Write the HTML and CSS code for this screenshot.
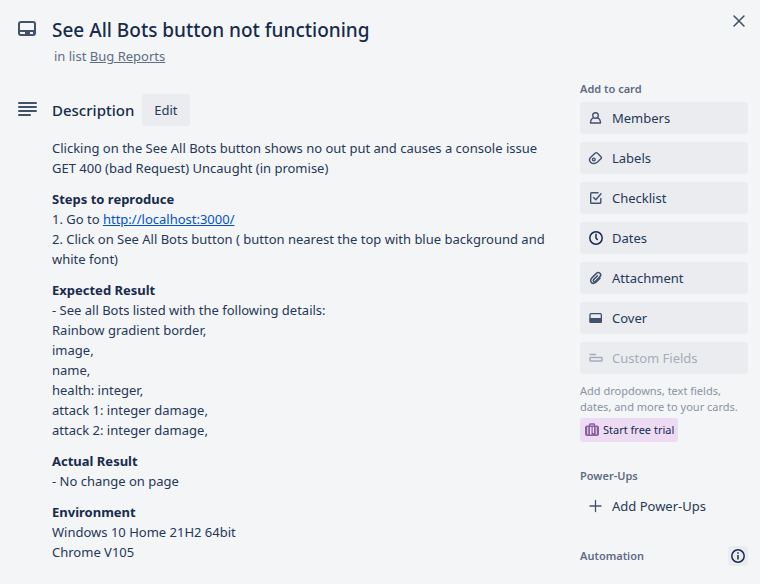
FILE: index.html
```html
<!DOCTYPE html>
<html lang="en">
<head>
<meta charset="utf-8">
<title>See All Bots button not functioning</title>
<link rel="stylesheet" href="styles.css">
</head>
<body>
<div class="card">
  <header class="card-header">
    <svg class="icon-large" viewBox="0 0 24 24" fill="currentColor" aria-hidden="true"><path fill-rule="evenodd" d="M5 5a3 3 0 0 0-3 3v9a3 3 0 0 0 3 3h12a3 3 0 0 0 3-3V8a3 3 0 0 0-3-3H5ZM4 8a1 1 0 0 1 1-1h12a1 1 0 0 1 1 1v6H4V8Zm0 8v1a1 1 0 0 0 1 1h4v-2H4Zm10 0h3v2h-3v-2Z"/></svg>
    <div>
      <h1>See All Bots button not functioning</h1>
      <p class="in-list">in list <a href="#">Bug Reports</a></p>
    </div>
    <button class="close" type="button" aria-label="Close"><svg class="icon-close" viewBox="0 0 20 20" fill="none" stroke="currentColor" stroke-width="1.8" stroke-linecap="round" aria-hidden="true"><path d="m4.500 4.500 11 11m0-11-11 11"/></svg></button>
  </header>
  <div class="columns">
    <main>
      <div class="section-head">
        <svg class="icon-large" viewBox="0 0 24 24" fill="none" stroke="currentColor" stroke-width="2" stroke-linecap="round" aria-hidden="true"><path d="M3 5h17M3 9h17M3 13h17M3 17h11"/></svg>
        <h2>Description</h2>
        <button class="edit" type="button">Edit</button>
      </div>
      <div class="description">
        <p>Clicking on the See All Bots button shows no out put and causes a console issue GET 400 (bad Request) Uncaught (in promise)</p>
        <p><strong>Steps to reproduce</strong><br>1. Go to <a href="http://localhost:3000/">http://localhost:3000/</a><br>2. Click on See All Bots button ( button nearest the top with blue background and white font)</p>
        <p><strong>Expected Result</strong><br>- See all Bots listed with the following details:<br>Rainbow gradient border,<br>image,<br>name,<br>health: integer,<br>attack 1: integer damage,<br>attack 2: integer damage,</p>
        <p><strong>Actual Result</strong><br>- No change on page</p>
        <p><strong>Environment</strong><br>Windows 10 Home 21H2 64bit<br>Chrome V105</p>
      </div>
    </main>
    <aside>
      <section>
        <h3>Add to card</h3>
        <div class="actions">
          <button class="action" type="button"><svg class="icon" viewBox="0 0 16 16" fill="none" stroke="currentColor" stroke-width="1.4" stroke-linejoin="round" aria-hidden="true"><circle cx="7.500" cy="5.500" r="2.800"/><path d="M5.700 7.600C3.500 8.500 2.500 10 2.500 13h10c0-3-1-4.500-3.200-5.400"/></svg>Members</button>
          <button class="action" type="button"><svg class="icon" viewBox="0 0 16 16" fill="none" stroke="currentColor" stroke-width="1.4" stroke-linejoin="round" aria-hidden="true"><path d="M2.500 7.500 7 3.200c.7-.7 1.500-.7 2.200-.1l3.800 3.600c.6.600.6 1.200.1 1.900l-3.900 3.700c-1.700 1.500-4.800 1.800-6.400.2-1.500-1.500-1.700-3.500-.3-5Z"/><circle cx="5.800" cy="9.500" r="1.400"/></svg>Labels</button>
          <button class="action" type="button"><svg class="icon" viewBox="0 0 16 16" fill="none" stroke="currentColor" stroke-width="1.4" stroke-linecap="round" stroke-linejoin="round" aria-hidden="true"><path d="M10 2.700H3.500a.8.800 0 0 0-.8.800v9c0 .4.400.8.800.8h8.500c.4 0 .8-.4.800-.8V8.500M5.500 7.500l2.300 2.300 5.200-6"/></svg>Checklist</button>
          <button class="action dark" type="button"><svg class="icon" viewBox="0 0 16 16" fill="none" stroke="currentColor" stroke-width="1.500" stroke-linecap="round" stroke-linejoin="round" aria-hidden="true"><circle cx="8" cy="8" r="6.200"/><path d="M8 4.200V8l1.300 1.500"/></svg>Dates</button>
          <button class="action" type="button"><svg class="icon" viewBox="0 0 16 16" fill="none" stroke="currentColor" stroke-width="1.500" stroke-linecap="round" stroke-linejoin="round" aria-hidden="true"><path d="m12 8.200-3.800 3.900c-1.500 1.500-3.500 1.700-4.700.5-1.200-1.200-1.100-3.200.4-4.700l4.300-4.300c1.200-1.200 2.800-1.300 3.800-.4 1 1 .9 2.600-.2 3.700l-4.300 4.300c-.7.700-1.400.8-1.900.2-.6-.6-.5-1.300.2-2L9.600 5.700"/></svg>Attachment</button>
          <button class="action" type="button"><svg class="icon" viewBox="0 0 16 16" aria-hidden="true"><rect x="2" y="3.700" width="11.300" height="8.600" rx="1" fill="none" stroke="currentColor" stroke-width="1.300"/><path fill="currentColor" d="M1.500 8h12.400v4a1 1 0 0 1-1 1H2.500a1 1 0 0 1-1-1Z"/></svg>Cover</button>
          <button class="action" type="button" disabled><svg class="icon" viewBox="0 0 16 16" fill="none" stroke="currentColor" stroke-width="1.500" stroke-linecap="round" stroke-linejoin="round" aria-hidden="true"><path d="M2 4.500h5.500"/><rect x="2" y="7.500" width="12" height="3.500" rx=".5"/></svg>Custom Fields</button>
        </div>
        <p class="hint">Add dropdowns, text fields, dates, and more to your cards.</p>
        <button class="trial" type="button"><svg class="icon" viewBox="0 0 16 16" aria-hidden="true"><path fill="none" stroke="currentColor" stroke-width="1.300" d="M5.500 4V2.700c0-.4.300-.7.700-.7h3.600c.4 0 .7.300.7.700V4"/><path fill="currentColor" fill-rule="evenodd" d="M3 3.500h10a2 2 0 0 1 2 2V12a2 2 0 0 1-2 2H3a2 2 0 0 1-2-2V5.500a2 2 0 0 1 2-2ZM3.300 5v7.500h1V5h-1Zm8.400 0v7.500h1V5h-1ZM6 5v7.500h1.500V5H6Zm2.700 0v6H10V5H8.700Z"/></svg>Start free trial</button>
      </section>
      <section>
        <h3>Power-Ups</h3>
        <button class="action plain" type="button"><svg class="icon" viewBox="0 0 16 16" fill="none" stroke="currentColor" stroke-width="1.300" stroke-linecap="round" aria-hidden="true"><path d="M7.500 2.500v11M2 8h11"/></svg>Add Power-Ups</button>
      </section>
      <section class="automation">
        <h3>Automation</h3>
        <button class="info" type="button" aria-label="About automation"><svg class="icon" viewBox="0 0 16 16" fill="none" stroke="currentColor" stroke-width="1.500" aria-hidden="true"><circle cx="8" cy="8" r="6.200"/><path d="M8 7v4.500M8 4.300v1.500"/></svg></button>
      </section>
    </aside>
  </div>
</div>
</body>
</html>
```
FILE: styles.css
```css
* {
  box-sizing: border-box;
}

body {
  margin: 0;
  background: #f4f5f7;
  color: #172b4d;
  font: 13px/20px "Noto Sans", "Open Sans", sans-serif;
}

h1, h2, h3, p {
  margin: 0;
}

button {
  border: 0;
  border-radius: 3px;
  background: #ebecf0;
  color: #253858;
  font: inherit;
  cursor: pointer;
}

svg {
  display: block;
  flex: none;
  color: #42526e;
}

.card {
  padding: 16px 12px 16px 16px;
}

.card-header {
  display: grid;
  grid-template-columns: 24px 1fr auto;
  column-gap: 12px;
  align-items: start;
}

.icon-large {
  width: 24px;
  height: 24px;
}

.icon {
  width: 16px;
  height: 16px;
}

h1 {
  font-size: 19px;
  line-height: 28px;
  font-weight: 500;
}

.in-list {
  padding: 2px;
  color: #5e6c84;
}

.in-list a {
  color: inherit;
}

.close {
  padding: 0;
  background: none;
}

.icon-close {
  width: 18px;
  height: 18px;
  margin-top: -4px;
}

.columns {
  display: grid;
  grid-template-columns: 1fr 168px;
  column-gap: 16px;
}

main {
  padding-top: 26px;
}

.section-head {
  display: flex;
  align-items: center;
}

h2 {
  margin: 0 8px 0 12px;
  font-size: 15px;
  font-weight: 500;
}

.edit {
  height: 32px;
  padding: 0 12px;
}

.description {
  padding: 12px 0 0 36px;
  color: #253858;
}

.description p + p {
  margin-top: 11px;
}

.description strong {
  color: #172b4d;
}

.description a {
  color: #0052cc;
}

aside {
  padding-top: 11px;
}

h3 {
  color: #5e6c84;
  font-size: 11px;
  line-height: 20px;
  font-weight: 600;
}

.actions {
  display: grid;
  gap: 8px;
  margin-top: 3px;
}

.action {
  display: flex;
  align-items: center;
  gap: 8px;
  width: 100%;
  height: 32px;
  padding: 0 8px;
  text-align: left;
}

.action:disabled,
.action:disabled svg {
  color: #a5adba;
}

.dark svg,
.info svg {
  color: #172b4d;
}

.plain {
  margin-top: 4px;
  background: none;
}

.hint {
  margin: 9px 0 3px;
  color: #8993a4;
  font-size: 11px;
  line-height: 16px;
}

.trial {
  display: flex;
  align-items: center;
  gap: 3px;
  height: 24px;
  padding: 0 4px;
  background: #eddbf4;
  color: #172b4d;
  font-size: 11px;
}

.trial svg {
  color: #89609e;
}

section + section {
  margin-top: 24px;
}

.automation {
  display: flex;
  align-items: center;
  justify-content: space-between;
}

.info {
  padding: 2px;
}
```
